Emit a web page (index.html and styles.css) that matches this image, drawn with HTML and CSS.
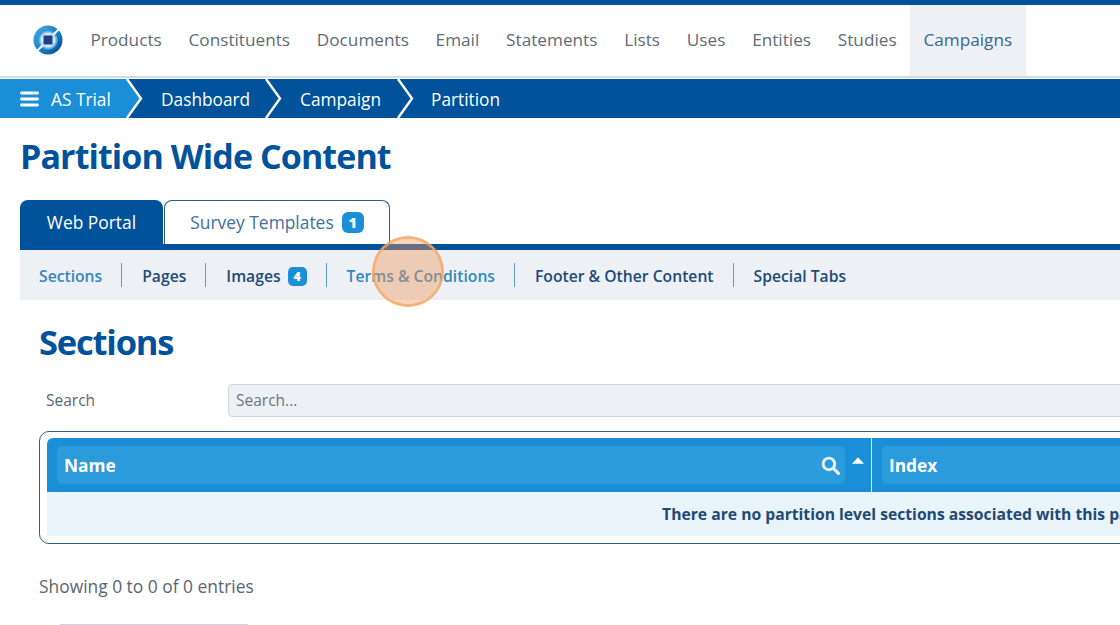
FILE: index.html
```html
<!DOCTYPE html>
<html lang="en">
<head>
<meta charset="utf-8">
<title>Partition Wide Content</title>
<link rel="stylesheet" href="styles.css">
</head>
<body>
<header class="topnav">
  <svg class="logo" width="30" height="30" viewBox="0 0 30 30" aria-hidden="true">
    <defs>
      <linearGradient id="lg" x1="0" y1="0" x2="1" y2="1">
        <stop offset="0" stop-color="#4aaee8"/>
        <stop offset=".6" stop-color="#1279c2"/>
        <stop offset="1" stop-color="#06457f"/>
      </linearGradient>
      <radialGradient id="rg">
        <stop offset="0" stop-color="#f2f9fe"/>
        <stop offset=".65" stop-color="#cde7f7"/>
        <stop offset="1" stop-color="#2a8ad0"/>
      </radialGradient>
    </defs>
    <circle cx="15" cy="15" r="14.500" fill="url(#lg)"/>
    <circle cx="15" cy="15" r="10" fill="url(#rg)"/>
    <path d="M3.500 26.500 L10 20 M20 10 L26.500 3.500" stroke="#eef7fc" stroke-width="2"/>
    <rect x="10.500" y="10.500" width="9" height="9" fill="#1f3f86"/>
  </svg>
  <nav class="menu">
    <a class="menu-item">Products</a>
    <a class="menu-item">Constituents</a>
    <a class="menu-item">Documents</a>
    <a class="menu-item">Email</a>
    <a class="menu-item">Statements</a>
    <a class="menu-item">Lists</a>
    <a class="menu-item">Uses</a>
    <a class="menu-item">Entities</a>
    <a class="menu-item">Studies</a>
    <a class="menu-item active">Campaigns</a>
  </nav>
</header>
<div class="crumbs">
  <div class="crumb first">
    <svg class="burger" width="19" height="16" viewBox="0 0 19 16" aria-hidden="true"><path d="M1.500 2h16M1.500 8h16M1.500 14h16" stroke="#fff" stroke-width="2.800" stroke-linecap="round"/></svg>
    <span class="crumb-text">AS Trial</span>
    <svg class="chev" width="17" height="39" viewBox="0 0 17 39" aria-hidden="true"><path d="M0 0 L15 19.500 L0 39 Z" fill="#1a8fd8"/><path d="M1 0 L15 19.500 L1 39" fill="none" stroke="#fff" stroke-width="2.400"/></svg>
  </div>
  <div class="crumb second">
    <span class="crumb-text">Dashboard</span>
    <svg class="chev" width="17" height="39" viewBox="0 0 17 39" aria-hidden="true"><path d="M1 0 L15 19.500 L1 39" fill="none" stroke="#fff" stroke-width="2.400"/></svg>
  </div>
  <div class="crumb third">
    <span class="crumb-text">Campaign</span>
    <svg class="chev" width="17" height="39" viewBox="0 0 17 39" aria-hidden="true"><path d="M1 0 L15 19.500 L1 39" fill="none" stroke="#fff" stroke-width="2.400"/></svg>
  </div>
  <div class="crumb last"><span class="crumb-text">Partition</span></div>
</div>
<main class="page">
  <h1 class="title">Partition Wide Content</h1>
  <div class="tabs">
    <a class="tab tab-on">Web Portal</a>
    <a class="tab tab-off">Survey Templates <span class="badge">1</span></a>
  </div>
  <div class="subtabs">
    <a class="sub current">Sections</a>
    <a class="sub">Pages</a>
    <a class="sub">Images <span class="badge small">4</span></a>
    <a class="sub current">Terms &amp; Conditions</a>
    <a class="sub">Footer &amp; Other Content</a>
    <a class="sub">Special Tabs</a>
  </div>
  <section class="content">
    <h2 class="heading">Sections</h2>
    <div class="search-row">
      <label class="search-label">Search</label>
      <div class="search-input">Search...</div>
    </div>
    <div class="table-wrap">
      <div class="thead">
        <div class="th th-name">
          <div class="th-inner">
            <span>Name</span>
            <svg class="mag" width="19" height="19" viewBox="0 0 18 18" aria-hidden="true"><circle cx="7.500" cy="7.500" r="5.500" fill="none" stroke="#e8f4fb" stroke-width="2.800"/><path d="M11.500 11.500 L16.500 16.500" stroke="#e8f4fb" stroke-width="3" stroke-linecap="round"/></svg>
          </div>
          <svg class="sort" width="12" height="7" viewBox="0 0 12 7" aria-hidden="true"><path d="M6 .5 L11.500 6.500 H.5 Z" fill="#fff" stroke="#fff" stroke-width=".5" stroke-linejoin="round"/></svg>
        </div>
        <div class="th th-index">
          <div class="th-inner"><span>Index</span></div>
        </div>
      </div>
      <div class="tbody">There are no partition level sections associated with this partition</div>
    </div>
    <p class="showing">Showing 0 to 0 of 0 entries</p>
    <div class="pager"></div>
  </section>
</main>
<div class="click-marker"></div>
</body>
</html>
```
FILE: styles.css
```css
* { box-sizing: border-box; }
html, body { margin: 0; height: 625px; overflow: hidden; background: #fff; }
body { font-family: "Open Sans", "Noto Sans", sans-serif; color: #5a6670; position: relative; width: 1120px; }

.topnav { height: 78px; border-top: 5px solid #00529b; border-bottom: 2px solid #d3dbe3; display: flex; align-items: stretch; padding-left: 33px; background: #fff; }
.logo { align-self: center; margin-right: 14px; margin-top: -1px; }
.menu { display: flex; align-items: stretch; }
.menu-item { display: flex; align-items: center; padding: 0 13.400px 2px; font-size: 17.200px; color: #5f6b75; white-space: nowrap; }
.menu-item.active { background: #edf1f6; color: #3a6593; }

.crumbs { height: 39px; margin-top: 1px; background: #00529b; display: flex; color: #fff; font-size: 17.300px; font-weight: 500; }
.crumb { display: flex; align-items: center; position: relative; white-space: nowrap; }
.crumb-text { padding-top: 2px; }
.crumb.first { width: 126px; padding-left: 20px; background: #1a8fd8; }
.burger { margin-right: 12px; }
.crumb.second { width: 139px; padding-left: 35px; }
.crumb.third { width: 132px; padding-left: 35px; }
.crumb.last { padding-left: 34px; }
.chev { position: absolute; top: 0; left: 100%; }

.page { padding: 0 0 0 20px; width: 1802px; }
.title { margin: 15px 0 0; height: 48px; font-size: 34px; line-height: 46px; font-weight: 700; color: #00529b; letter-spacing: -.9px; }
.tabs { display: flex; height: 44px; margin-top: 19px; gap: 1px; align-items: stretch; }
.tab { display: flex; align-items: center; justify-content: center; font-size: 17.400px; border-radius: 8px 8px 0 0; white-space: nowrap; }
.tab-on { width: 143px; background: #00529b; color: #fff; }
.tab-off { width: 226px; border: 1px solid #2e5f86; border-bottom: 0; color: #41709d; gap: 8px; padding-bottom: 1px; }
.badge { display: inline-flex; align-items: center; justify-content: center; width: 22px; height: 21px; background: #1a8fd8; color: #fff; border-radius: 6px; font-size: 14.500px; font-weight: 800; }
.badge.small { width: 19px; height: 19px; font-size: 12.500px; margin-left: 7px; border-radius: 5px; }
.subtabs { height: 56px; border-top: 6px solid #00529b; background: #edf1f6; padding-left: 19px; display: flex; align-items: center; }
.sub { display: flex; align-items: center; height: 24px; padding-top: 2px; font-size: 15.690px; font-weight: 600; color: #1f4a75; padding-right: 19px; margin-right: 20px; border-right: 1px solid #5a9fc4; white-space: nowrap; }
.sub:last-child { border-right: 0; }
.sub.current { color: #3588bf; }

.content { padding: 0 0 0 19px; }
.heading { margin: 20px 0 0; height: 44px; font-size: 34.500px; line-height: 44px; font-weight: 700; color: #00529b; letter-spacing: -1.200px; }
.search-row { display: flex; align-items: center; margin-top: 20px; height: 33px; }
.search-label { width: 189px; padding: 0 0 1px 7px; font-size: 15.500px; color: #5a6670; }
.search-input { flex: 1; height: 33px; background: #edf1f6; border: 1px solid #cfd6dd; border-radius: 4px; padding: 0 0 1px 7px; display: flex; align-items: center; font-size: 15.500px; color: #6b757e; }
.table-wrap { margin-top: 14px; height: 113px; border: 1px solid #2e5f86; border-radius: 10px; padding: 6px 7px 7px; }
.thead { height: 54px; background: #1a8fd8; border-radius: 6px 0 0 0; display: flex; }
.th { display: flex; align-items: center; position: relative; }
.th-name { width: 825px; border-right: 1px solid #dcebf6; padding-left: 10px; flex: none; }
.th-inner { height: 38px; background: #2b9bdc; border-radius: 5px; display: flex; align-items: center; justify-content: space-between; padding: 0 7px; color: #fff; font-size: 17.300px; font-weight: 700; }
.th-name .th-inner { width: 788px; }
.mag { margin-right: -2px; }
.sort { position: absolute; right: 7px; top: 19px; }
.th-index { flex: 1; padding-left: 10px; }
.th-index .th-inner { width: 400px; }
.tbody { height: 44px; background: #e9f3fa; display: flex; align-items: center; justify-content: center; font-size: 15.700px; font-weight: 700; color: #1f4a75; }
.showing { margin: 31px 0 0; font-size: 17.400px; line-height: 22px; color: #5a6670; }
.pager { margin: 27px 0 0 21px; width: 188px; height: 1px; background: #cfd6dd; }

.click-marker { position: absolute; left: 372px; top: 236px; width: 72px; height: 71px; border-radius: 50%; background: rgba(240, 150, 90, .42); border: 3px solid rgba(243, 164, 99, .85); background-clip: padding-box; }
```
